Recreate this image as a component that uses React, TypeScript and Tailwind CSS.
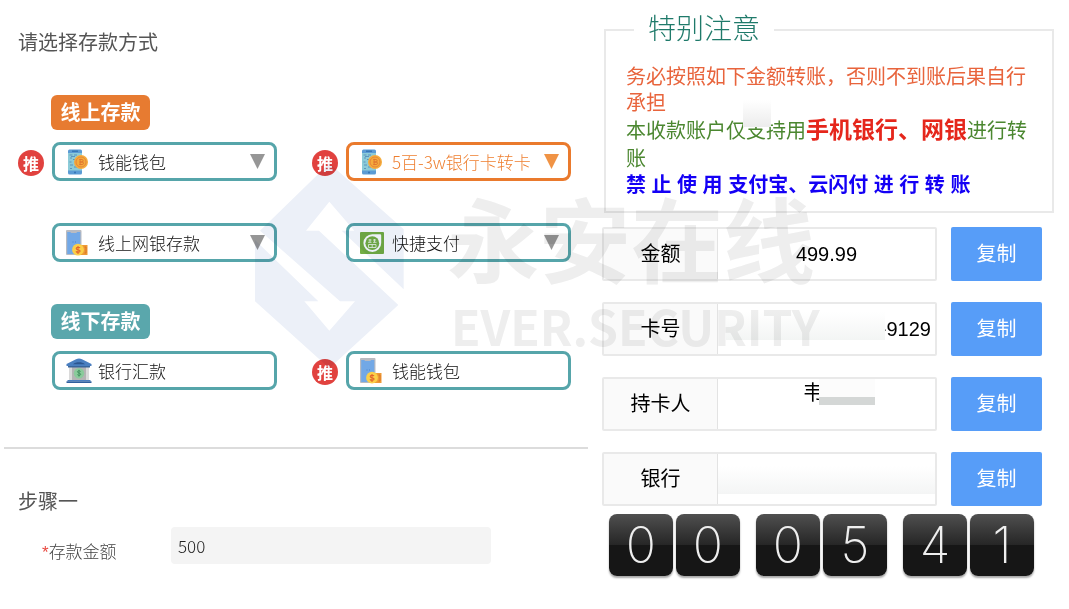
import type { ReactNode } from 'react';

const CoinPhone = () => (
  <svg viewBox="0 0 24 26" className="h-[26px] w-6 shrink-0" aria-hidden="true">
    <rect x="2" y="0.500" width="14" height="25" rx="1.5" fill="#5b9bd5" />
    <rect x="2" y="4" width="14" height="17.5" fill="#8ccbd8" />
    <path d="M6 2.200h6" stroke="#2f6fae" strokeWidth="1.2" />
    <circle cx="9" cy="23.500" r="1" fill="#3474b4" />
    <path d="M3.500 6h3m1.500 0h3M4 9h2m1 1.500h2M3.500 13h2M4 16h3m1 2h3M5 7.500h4M4 19.500h2" stroke="#4f86b8" strokeWidth="0.8" />
    <circle cx="15" cy="13" r="7" fill="#f5ac3c" />
    <circle cx="15" cy="13" r="5" fill="none" stroke="#e5853a" strokeWidth="1" />
    <path d="M13.300 10.500h2.600a1.200 1.200 0 0 1 0 2.500h-2.200h2.500a1.200 1.200 0 0 1 0 2.500h-2.900M14.100 9.800v6.400" fill="none" stroke="#e07730" strokeWidth="1" />
  </svg>
);

const CashPhone = () => (
  <svg viewBox="0 0 24 26" className="h-[26px] w-6 shrink-0" aria-hidden="true">
    <rect x="0" y="0" width="15.5" height="25" rx="1" fill="#b9bbc1" />
    <path d="M1.200 2h3l1 1h5l1-1h3.100V24H1.200z" fill="#72a8e6" />
    <path d="M6.500 12h1m1.500 0h1" stroke="#3f79c4" strokeWidth="0.8" />
    <rect x="12" y="15" width="9.500" height="10" fill="#ee9a35" />
    <path d="M18.500 17h1.500v6h-1.500" fill="none" stroke="#db7429" strokeWidth="1" />
    <circle cx="12" cy="19.700" r="5.900" fill="#fbcf48" />
    <path d="M14 18c-.5-1-3.800-1.200-3.800.4 0 1.800 3.900.9 3.900 2.700 0 1.600-3.400 1.500-4.100.3M12 16v8" fill="none" stroke="#e2632d" strokeWidth="1.100" />
  </svg>
);

const QuickPay = () => (
  <svg viewBox="0 0 24 24" className="h-6 w-6 shrink-0" aria-hidden="true">
    <rect x="0" y="1" width="24" height="22" rx="1" fill="#74ae45" />
    <path d="M12.500 3.200H20a1.200 1.200 0 0 1 1.200 1.200V12a8.900 8.900 0 1 1-8.700-8.800z" fill="#fff" />
    <circle cx="12.300" cy="12.200" r="6.900" fill="#74ae45" />
    <path d="M8.500 9h3M13 9h3M8 11.300h3.500M13 11.300h3.500M8.500 13.500h7.500v3h-7.500zM10 8v3.500M14.500 8v3.500M12.200 13v4" fill="none" stroke="#e8f3de" strokeWidth="0.9" />
  </svg>
);

const Bank = () => (
  <svg viewBox="0 0 26 26" className="h-[26px] w-[26px] shrink-0" aria-hidden="true">
    <path d="M0.500 6 10 1.200a6.500 6.500 0 0 1 6 0L25.500 6v2h-25z" fill="#4a7fc0" />
    <path d="M7 6.200c3-2.600 9-2.600 12 0z" fill="#2c568f" />
    <rect x="3" y="8" width="20" height="14" fill="#b4b4b4" />
    <path d="M3 8h3v14H3zM20 8h3v14h-3z" fill="#dadada" />
    <path d="M2 8h22v1.500H2z" fill="#39659b" />
    <circle cx="13" cy="15.300" r="5.200" fill="#8acb9b" />
    <path d="M14.600 13.500c-.6-1-3.200-.9-3.200.3 0 1.500 3.300.9 3.300 2.500 0 1.400-2.700 1.400-3.400.2M13 11.800v6.800" fill="none" stroke="#3f8d5c" strokeWidth="0.9" />
    <path d="M1.500 22h23v1.300h-23z" fill="#4a7fc0" />
    <path d="M0.500 23.300h25V25h-25z" fill="#2f5f9e" />
  </svg>
);

const Recommend = () => (
  <span className="flex size-[26px] items-center justify-center rounded-full bg-[#e1423f] text-base font-bold text-white">推</span>
);

interface MethodProps {
  label: string;
  icon: ReactNode;
  recommended?: boolean;
  dropdown?: boolean;
  active?: boolean;
}

const Method = ({ label, icon, recommended, dropdown, active }: MethodProps) => {
  const box = `flex h-[39px] min-w-0 flex-1 items-center rounded-lg border-3 bg-white px-[9px] text-[17px] ${
    active ? 'border-[#ea7a2d] text-[#ee7f30]' : 'border-[#56a5aa] text-[#111]'
  }`;
  const media = <span className="flex w-[34px] shrink-0 justify-start pl-0.5">{icon}</span>;

  return (
    <div className="flex items-center gap-2">
      <div className="mt-0.5 size-[26px] shrink-0">{recommended && <Recommend />}</div>
      {dropdown ? (
        <div className={box}>
          {media}
          <select aria-label={label} className="h-full min-w-0 flex-1 appearance-none bg-transparent font-light outline-none">
            <option>{label}</option>
          </select>
          <svg viewBox="0 0 15 15" className={`size-[15px] shrink-0 ${active ? 'text-[#f09345]' : 'text-[#969696]'}`} aria-hidden="true">
            <path d="M0 0h15L7.500 15z" fill="currentColor" />
          </svg>
        </div>
      ) : (
        <button type="button" className={`${box} font-light`}>
          {media}
          {label}
        </button>
      )}
    </div>
  );
};

const DetailRow = ({ label, children }: { label: string; children?: ReactNode }) => (
  <div className="flex h-[54px] gap-3.5">
    <dl className="flex flex-1 rounded-xs border-2 border-[#e9e9e9]">
      <dt className="flex w-[114px] items-center justify-center border-r border-[#e3e3e3] bg-[#fafafa]">{label}</dt>
      <dd className="relative flex flex-1 items-center justify-center">{children}</dd>
    </dl>
    <button type="button" className="w-[91px] rounded-xs bg-[#579df8] text-white">复制</button>
  </div>
);

const Digit = ({ value }: { value: string }) => (
  <span className="flex h-[62px] w-16 items-center justify-center rounded-lg bg-linear-to-b from-[#505050] from-0% via-[#262626] via-50% to-[#161616] to-50% font-['Inter',sans-serif] text-[50px] font-extralight text-[#eee] shadow-[0_2px_2px_rgba(0,0,0,0.35)]">
    {value}
  </span>
);

const Watermark = () => (
  <div className="pointer-events-none absolute top-[160px] left-[245px] flex mix-blend-multiply" aria-hidden="true">
    <svg viewBox="0 0 510 645" className="h-[215px] w-[170px]">
      <path
        d="M253 10 476 208V388L290 212H328L253 125 183 212H222L460 435 253 625 30 424V240L220 424H178L253 512 330 424H285L45 212z"
        fill="#ecf0f8"
      />
    </svg>
    <div className="pt-7 pl-8 font-bold whitespace-nowrap text-[#eee]">
      <div className="text-[92px] leading-[112px]">永安在线</div>
      <div className="pl-1 font-['Noto_Sans_CJK_SC',sans-serif] text-5xl leading-[50px]">EVER.SECURITY</div>
    </div>
  </div>
);

const App = () => {
  return (
    <div className="relative min-h-screen bg-white font-['Liberation_Sans','Noto_Sans_CJK_SC',sans-serif] text-xl">
      <main className="grid grid-cols-[55fr_45fr]">
        <section className="pt-7">
          <div className="pr-[17px] pl-[18px]">
            <h1 className="leading-[30px] text-[#555]">请选择存款方式</h1>
            <h2 className="mt-[37px] ml-[33px] flex h-[35px] w-[99px] items-center justify-center rounded-md bg-[#e77b31] font-bold text-white">线上存款</h2>
            <div className="mt-3 grid grid-cols-2 gap-x-[35px] gap-y-[42px] font-['Noto_Sans_CJK_SC',sans-serif]">
              <Method label="钱能钱包" icon={<CoinPhone />} recommended dropdown />
              <Method label="5百-3w银行卡转卡" icon={<CoinPhone />} recommended dropdown active />
              <Method label="线上网银存款" icon={<CashPhone />} dropdown />
              <Method label="快捷支付" icon={<QuickPay />} dropdown />
            </div>
            <h2 className="mt-[42px] ml-[33px] flex h-[35px] w-[99px] items-center justify-center rounded-md bg-[#5aa7ac] font-bold text-white">线下存款</h2>
            <div className="mt-3 grid grid-cols-2 gap-x-[35px] font-['Noto_Sans_CJK_SC',sans-serif]">
              <Method label="银行汇款" icon={<Bank />} />
              <Method label="钱能钱包" icon={<CashPhone />} recommended />
            </div>
          </div>
          <hr className="mt-[57px] ml-1 border-t-2 border-[#dcdcdc]" />
          <div className="px-[18px] pt-[38px]">
            <h2 className="leading-[30px] text-[#555]">步骤一</h2>
            <div className="mt-2.5 flex">
              <label htmlFor="amount" className="w-[153px] pt-3.5 pl-6 text-[17px] leading-6 font-light text-[#444]">
                <span className="text-[#e8483f]">*</span>存款金额
              </label>
              <input
                id="amount"
                defaultValue="500"
                className="h-[37px] w-80 rounded-sm bg-[#f4f4f4] px-[7px] font-['Noto_Sans_CJK_SC',sans-serif] text-[17px] font-light text-[#222] outline-none"
              />
            </div>
          </div>
        </section>

        <section className="pt-2.5 pr-[15px] pl-3.5">
          <fieldset className="ml-0.5 border-2 border-[#e9e9e9] pt-3.5 pr-2.5 pb-3.5 pl-5">
            <legend className="ml-2 px-3.5 text-[28px] leading-10 font-light text-[#1f7a6a]">特别注意</legend>
            <p className="leading-[26px] text-[#e8643c]">务必按照如下金额转账，否则不到账后果自行承担</p>
            <p className="relative leading-7 text-[#4b8730]">
              本收款账户仅支持用<strong className="text-[23px] font-bold text-[#e5261b]">手机银行、网银</strong>进行转账
              <span className="absolute -top-4 left-[117px] h-[27px] w-7 bg-linear-to-b from-white to-[#ececec]" />
            </p>
            <p className="leading-6 font-bold text-[#1400f5]">禁 止 使 用 支付宝、云闪付 进 行 转 账</p>
          </fieldset>
          <div className="mt-3.5 flex flex-col gap-[21px] pr-3">
            <DetailRow label="金额">499.99</DetailRow>
            <DetailRow label="卡号">
              <span className="ml-auto pr-1">-9129</span>
              <span className="absolute top-2 right-[50px] left-2 h-7 bg-linear-to-b from-white to-[#f3f5f4]" />
            </DetailRow>
            <DetailRow label="持卡人">
              <span className="absolute top-0 left-[85px] leading-7">韦</span>
              <span className="absolute top-0 left-[101px] h-[26px] w-14 border-b-8 border-[#d4d7d6] bg-[#fcfcfc]" />
            </DetailRow>
            <DetailRow label="银行">
              <span className="absolute inset-x-0 top-3 h-7 bg-linear-to-b from-white to-[#f4f5f5]" />
            </DetailRow>
          </div>
          <div className="mt-2 flex gap-4 pl-[7px]" role="timer">
            {['00', '05', '41'].map((pair) => (
              <div key={pair} className="flex gap-[3px]">
                <Digit value={pair[0]} />
                <Digit value={pair[1]} />
              </div>
            ))}
          </div>
        </section>
      </main>
      <Watermark />
    </div>
  );
};

export default App;
